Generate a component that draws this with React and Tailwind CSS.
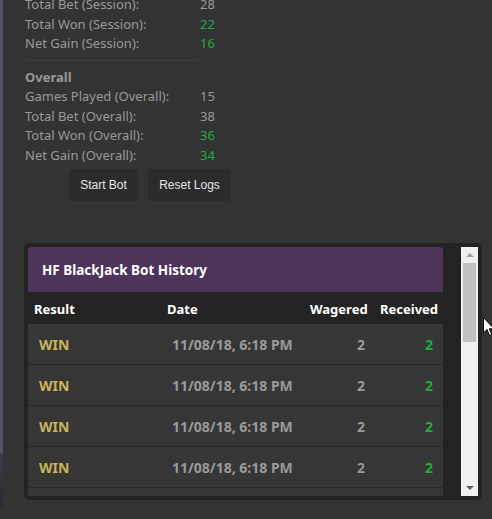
import React from 'react';

const session = [
  { label: 'Total Bet (Session):', value: 28 },
  { label: 'Total Won (Session):', value: 22, green: true },
  { label: 'Net Gain (Session):', value: 16, green: true },
];

const overall = [
  { label: 'Games Played (Overall):', value: 15 },
  { label: 'Total Bet (Overall):', value: 38 },
  { label: 'Total Won (Overall):', value: 36, green: true },
  { label: 'Net Gain (Overall):', value: 34, green: true },
];

const history = Array.from({ length: 5 }, () => ({
  result: 'WIN',
  date: '11/08/18, 6:18 PM',
  wagered: 2,
  received: 2,
}));

function StatRow({ label, value, green }) {
  return (
    <div className="flex h-[19.5px] items-center">
      <span className="w-[175px]">{label}</span>
      <span className={green ? 'text-[#1fae3a]' : ''}>{value}</span>
    </div>
  );
}

function Cursor() {
  return (
    <svg className="absolute left-[483px] top-[317px]" width="12" height="20" viewBox="0 0 12 20">
      <path d="M0.5 0.5 L0.5 16 L4 12.5 L6.5 18.5 L8.8 17.5 L6.3 11.8 L11 11.8 Z" fill="#fff" stroke="#000" strokeWidth="1" />
    </svg>
  );
}

export default function App() {
  return (
    <div
      className="relative flex h-[519px] w-[492px] overflow-hidden bg-[#333333] text-[13px]"
      style={{ fontFamily: '"Segoe UI", "Noto Sans", sans-serif' }}
    >
      {/* left edge of the window behind */}
      <div className="flex w-[3px] flex-col">
        <div className="h-[453px] bg-[#575166]" />
        <div className="h-[55px] bg-gradient-to-b from-[#3f3a4a] to-[#2c2933]" />
      </div>

      <div className="flex flex-1 flex-col pl-[22px]">
        <div className="-mt-[5px] text-[#999999]">
          {session.map((s) => (
            <StatRow key={s.label} {...s} />
          ))}
          <div className="mt-[6px] h-px w-[174px] bg-[#3e3e3e]" />
          <div className="mt-[7px] flex h-[19.5px] items-center font-bold">Overall</div>
          {overall.map((s) => (
            <StatRow key={s.label} {...s} />
          ))}
        </div>

        <div className="ml-[44px] mt-[4px] flex gap-[10px]" style={{ fontFamily: '"Liberation Sans", Arial, sans-serif' }}>
          <button className="h-[32px] w-[69px] rounded-[4px] bg-[#2b2b2b] text-[12px] text-[#e6e6e6]">Start Bot</button>
          <button className="h-[32px] w-[83px] rounded-[4px] bg-[#2b2b2b] text-[12px] text-[#e6e6e6]">Reset Logs</button>
        </div>

        {/* history panel */}
        <div className="-ml-px mt-[42px] flex h-[257px] w-[458px] gap-[18px] rounded-[5px] bg-[#232323] p-[4px]">
          <div className="flex w-[415px] flex-col overflow-hidden">
            <div className="flex h-[45px] shrink-0 items-center rounded-t-[3px] bg-[#4d3459] pl-[14px] pt-[2px] text-[13.5px] font-bold text-white">
              HF BlackJack Bot History
            </div>
            <div className="flex h-[32px] shrink-0 items-center pt-[3px] font-bold text-white">
              <span className="w-[139px] pl-[6px]">Result</span>
              <span className="w-[143px]">Date</span>
              <span className="w-[70px]">Wagered</span>
              <span className="w-[63px]">Received</span>
            </div>
            {history.map((h, i) => (
              <div key={i} className="flex h-[41px] shrink-0 items-center border-b border-[#292929] bg-[#363636] text-[14px] font-bold">
                <span className="w-[144px] pl-[11px] text-[#c9b45a]">{h.result}</span>
                <span className="w-[185px] text-[#9a9a9a]">{h.date}</span>
                <span className="w-[10px] text-[#9a9a9a]">{h.wagered}</span>
                <span className="w-[76px] pr-[10px] text-right text-[#1fae3a]">{h.received}</span>
              </div>
            ))}
          </div>

          {/* scrollbar */}
          <div className="flex w-[17px] shrink-0 flex-col items-center bg-[#f0f0f0]">
            <div className="flex h-[16px] items-center justify-center">
              <div className="h-0 w-0 border-x-[4px] border-b-[4px] border-x-transparent border-b-[#a3a3a3]" />
            </div>
            <div className="h-[79px] w-[13px] bg-[#c1c1c1]" />
            <div className="flex-1" />
            <div className="flex h-[16px] items-center justify-center">
              <div className="h-0 w-0 border-x-[4px] border-t-[4px] border-x-transparent border-t-[#606060]" />
            </div>
          </div>
        </div>
      </div>

      <Cursor />
    </div>
  );
}
